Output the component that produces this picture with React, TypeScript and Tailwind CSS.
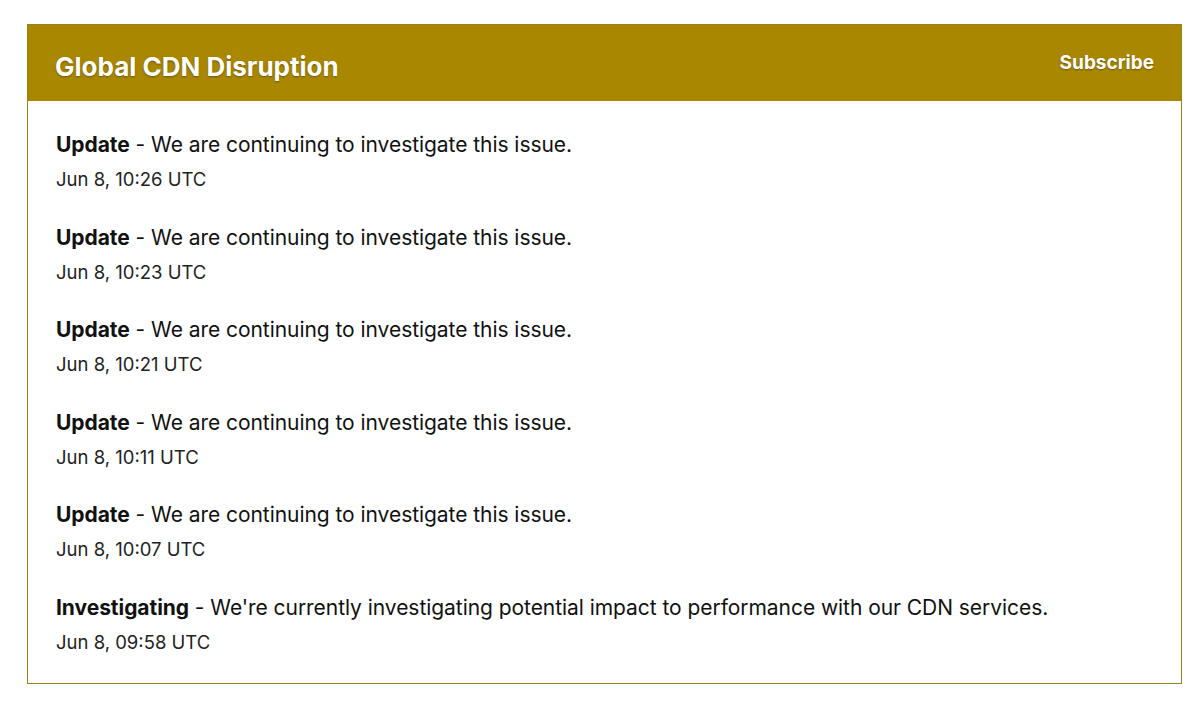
import React from 'react';

const updates = [
  { status: 'Update', body: 'We are continuing to investigate this issue.', time: 'Jun 8, 10:26 UTC' },
  { status: 'Update', body: 'We are continuing to investigate this issue.', time: 'Jun 8, 10:23 UTC' },
  { status: 'Update', body: 'We are continuing to investigate this issue.', time: 'Jun 8, 10:21 UTC' },
  { status: 'Update', body: 'We are continuing to investigate this issue.', time: 'Jun 8, 10:11 UTC' },
  { status: 'Update', body: 'We are continuing to investigate this issue.', time: 'Jun 8, 10:07 UTC' },
  {
    status: 'Investigating',
    body: "We're currently investigating potential impact to performance with our CDN services.",
    time: 'Jun 8, 09:58 UTC',
  },
];

export default function App() {
  return (
    <div className="w-[1200px] h-[702px] bg-white pt-6 pl-[27px] pr-[18px] font-['Inter',sans-serif]">
      <div className="border border-[#98801c]">
        {/* Header */}
        <div className="h-[76px] bg-[#a98700] flex items-center justify-between pl-[27px] pr-[27px]">
          <h1 className="text-[26px] font-bold text-white mt-[6px] [text-shadow:0_1px_2px_rgba(0,0,0,0.35)]">
            Global CDN Disruption
          </h1>
          <a className="text-[19px] font-bold text-white [text-shadow:0_1px_2px_rgba(0,0,0,0.35)]">
            Subscribe
          </a>
        </div>

        {/* Updates */}
        <div className="px-7 pt-[30px] pb-[29px] flex flex-col gap-[32.5px]">
          {updates.map((u, i) => (
            <div key={i}>
              <p className="text-[21px] leading-[28px] text-[#111] tracking-[-0.05px]">
                <strong className="font-bold">{u.status}</strong> - {u.body}
              </p>
              <p className="mt-2 text-[18.5px] leading-6 text-[#222]">{u.time}</p>
            </div>
          ))}
        </div>
      </div>
    </div>
  );
}
